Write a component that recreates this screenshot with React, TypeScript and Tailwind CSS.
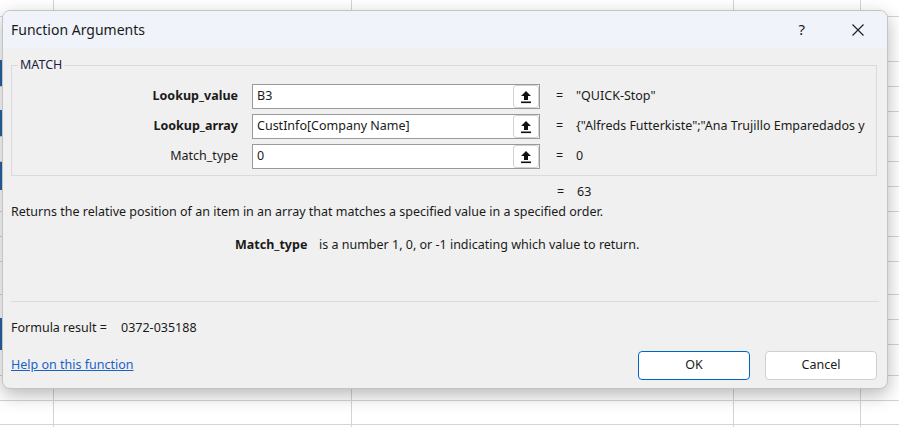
import React from 'react';

const font = { fontFamily: '"Noto Sans", "Open Sans", sans-serif' };

const rowLines = [16, 61, 86, 111, 136, 161, 186, 211, 236, 261, 294, 319, 344, 375, 400, 424];
const colLines = [53, 351, 733, 860];

const SheetGrid = () => (
  <svg className="absolute inset-0" width="899" height="427">
    {rowLines.map((y) => (
      <line key={'r' + y} x1="0" x2="899" y1={y + 0.5} y2={y + 0.5} stroke="#d4d4d4" />
    ))}
    {colLines.map((x) => (
      <line key={'c' + x} x1={x + 0.5} x2={x + 0.5} y1="0" y2="427" stroke="#d4d4d4" />
    ))}
    <rect x="0" y="60" width="2" height="26" fill="#2a64a4" />
    <rect x="0" y="110" width="2" height="26" fill="#2a64a4" />
    <rect x="0" y="162" width="2" height="28" fill="#2a64a4" />
    <rect x="0" y="318" width="2" height="32" fill="#2a64a4" />
  </svg>
);

const RefIcon = () => (
  <svg width="12" height="14" viewBox="0 0 12 14">
    <path d="M6 1 L11 6 L8 6 L8 10 L4 10 L4 6 L1 6 Z" fill="#111" />
    <rect x="1" y="11.5" width="10" height="1.6" fill="#111" />
  </svg>
);

interface ArgRowProps {
  label: string;
  bold?: boolean;
  value: string;
  result: string;
}

const ArgRow = ({ label, bold, value, result }: ArgRowProps) => (
  <div className="flex items-center h-[25px]">
    <div className={`w-[226px] text-right text-[12.5px] text-[#1a1a1a] ${bold ? 'font-bold' : ''}`}>{label}</div>
    <div className="ml-[14px] w-[288px] h-[25px] bg-white border border-[#9a9a9a] flex items-center">
      <span className="flex-1 pl-[4px] text-[12.5px] text-[#1a1a1a]">{value}</span>
      <div className="w-[26px] h-[23px] border border-[#d2d2d2] rounded-[3px] bg-white flex items-center justify-center">
        <RefIcon />
      </div>
    </div>
    <span className="ml-[16px] w-[20px] text-[12.5px] text-[#1a1a1a]">=</span>
    <span className="text-[12.5px] text-[#1a1a1a] whitespace-nowrap">{result}</span>
  </div>
);

export default function App() {
  return (
    <div className="relative w-[899px] h-[427px] bg-white overflow-hidden" style={font}>
      <SheetGrid />
      <div className="absolute left-[2px] top-[10px] w-[886px] h-[379px] rounded-[8px] border border-[#c4c4c4] bg-[#f0f0f0] shadow-[0_6px_18px_rgba(0,0,0,0.28)] overflow-hidden flex flex-col">
        <div className="h-[37px] bg-[#f0f3f9] flex items-center pl-[8px]">
          <span className="text-[14px] text-[#1a1a1a] flex-1">Function Arguments</span>
          <span className="text-[15px] text-[#1a1a1a] mr-[47px]">?</span>
          <svg width="12" height="12" viewBox="0 0 12 12" className="mr-[23px]">
            <path d="M0.5 0.5 L11.5 11.5 M11.5 0.5 L0.5 11.5" stroke="#222" strokeWidth="1.2" />
          </svg>
        </div>

        <div className="flex-1 flex flex-col px-[8px]">
          <fieldset className="mt-[9px] border border-[#dadada] pb-[6px] w-[866px]">
            <legend className="ml-[6px] px-[2px] text-[12.5px] text-[#1e2040] leading-[16px]">MATCH</legend>
            <div className="mt-[11px] flex flex-col gap-[5px]">
              <ArgRow label="Lookup_value" bold value="B3" result={'"QUICK-Stop"'} />
              <ArgRow label="Lookup_array" bold value="CustInfo[Company Name]" result={'{"Alfreds Futterkiste";"Ana Trujillo Emparedados y'} />
              <ArgRow label="Match_type" value="0" result="0" />
            </div>
          </fieldset>

          <div className="flex h-[16px] mt-[7px] text-[12.5px] text-[#1a1a1a]">
            <span className="ml-[546px] w-[20px]">=</span>
            <span>63</span>
          </div>

          <p className="mt-[5px] text-[12.5px] text-[#1a1a1a] leading-[16px]">
            Returns the relative position of an item in an array that matches a specified value in a specified order.
          </p>

          <div className="mt-[17px] flex text-[12.5px] text-[#1a1a1a] leading-[16px]">
            <span className="ml-[224px] w-[84px] font-bold">Match_type</span>
            <span>is a number 1, 0, or -1 indicating which value to return.</span>
          </div>

          <div className="mt-[48px] h-px bg-[#dcdcdc] w-[868px]" />

          <div className="mt-[18px] flex text-[12.5px] text-[#1a1a1a] leading-[16px]">
            <span className="w-[110px]">Formula result =</span>
            <span>0372-035188</span>
          </div>

          <div className="mt-[15px] flex items-center">
            <a href="#" className="flex-1 text-[12.5px] text-[#1a62c6] underline">Help on this function</a>
            <button className="w-[112px] h-[29px] rounded-[4px] border border-[#0067c0] bg-white text-[12.5px] text-[#1a1a1a]">OK</button>
            <button className="ml-[15px] mr-[2px] w-[112px] h-[29px] rounded-[4px] border border-[#cfcfcf] bg-white text-[12.5px] text-[#1a1a1a]">Cancel</button>
          </div>
        </div>
      </div>
    </div>
  );
}
